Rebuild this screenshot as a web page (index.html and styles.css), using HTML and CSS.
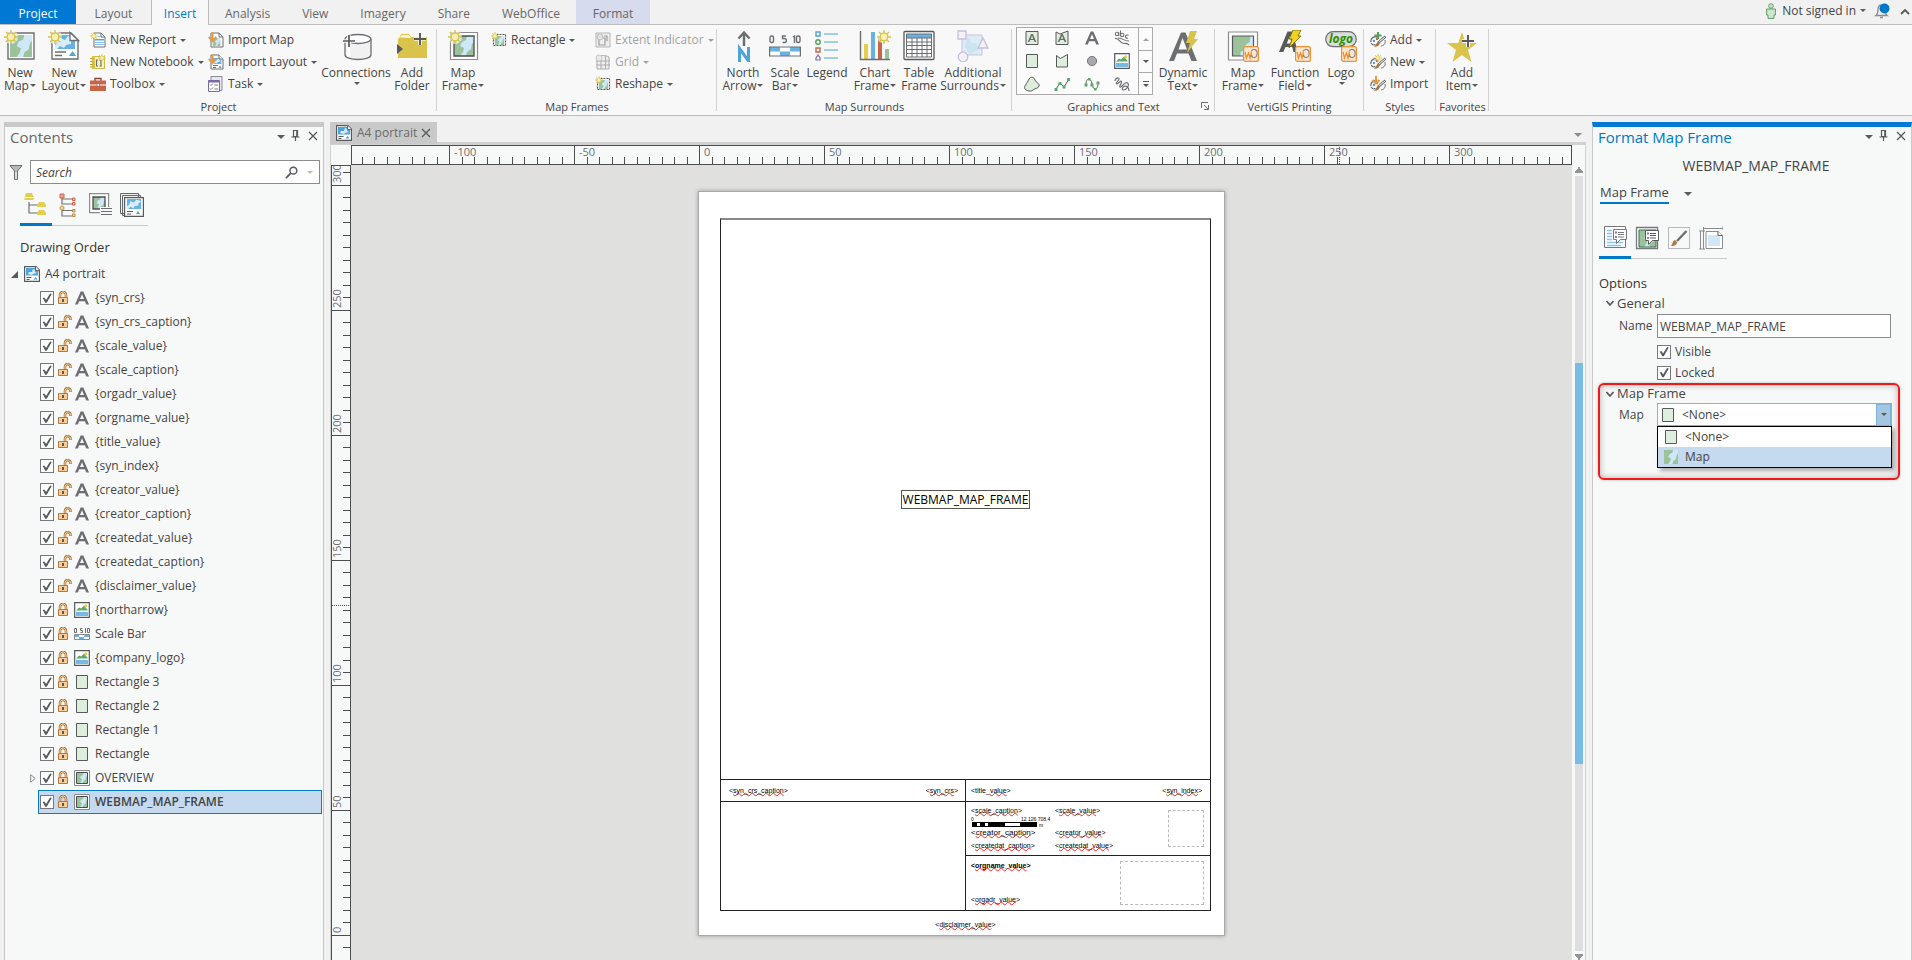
FILE: index.html
```html
<!DOCTYPE html>
<html lang="en">
<head>
<meta charset="utf-8">
<title>A4 portrait - Layout</title>
<link rel="stylesheet" href="styles.css">
</head>
<body>
<svg class="defs" aria-hidden="true">
  <defs>
    <symbol id="sun" viewBox="0 0 14 14"><path d="M7 0v14M0 7h14M2 2l10 10M12 2L2 12" stroke="#d9c34a" stroke-width="1.4"/><circle cx="7" cy="7" r="3.8" fill="#f8efb4" stroke="#d9c34a" stroke-width="1.3"/></symbol>
    <symbol id="terrain" viewBox="0 0 20 20"><path fill="#cfe8f7" d="M0 0h20v20H0z"/><path fill="#9bc29b" d="M0 0h13l-1 4-4 2-2 4 4 2-1 4-3 4H0zM20 5v15h-8l1-4 4-3 1-5z"/></symbol>
    <symbol id="blueland" viewBox="0 0 20 14"><path fill="#67b2e3" d="M0 0h20v14H0z"/><path fill="#d7edf9" d="M0 10l3-2 2-5 5 2 3-4 5 1 2 2-4 2v3l-5 1-2 3-4-2-3 3H0z"/></symbol>
    <symbol id="i-newmap" viewBox="0 0 32 32"><path d="M4 3h26v26H4z" fill="#fff" stroke="#6d6e71" stroke-width="1.4"/><use href="#terrain" x="6" y="5" width="22" height="22"/><circle cx="7" cy="7" r="7" fill="#f8f8f8" opacity=".7"/><use href="#sun" width="14" height="14"/></symbol>
    <symbol id="i-newlayout" viewBox="0 0 32 32"><path d="M4 3h19l7 7v19H4z" fill="#fff" stroke="#6d6e71" stroke-width="1.4"/><use href="#blueland" x="6" y="5" width="22" height="14" preserveAspectRatio="none"/><path d="M22 2.500v8h8.500z" fill="#fff" stroke="#6d6e71" stroke-width="1.300"/><path d="M7 22h11M7 25.500h7" stroke="#6d6e71" stroke-width="1.400"/><path d="M21 26l3.500-5 3.500 5z" fill="#4fa3db"/><circle cx="7" cy="7" r="7" fill="#f8f8f8" opacity=".7"/><use href="#sun" width="14" height="14"/></symbol>
    <symbol id="i-report" viewBox="0 0 16 16"><path d="M4 1h7l4 4v10H4z" fill="#fff" stroke="#6d6e71"/><path d="M11 1v4h4" fill="none" stroke="#6d6e71"/><path d="M5 7h9v1.500H5z" fill="#4fa3db"/><path d="M5 10.500h9M5 12.500h9M8 4.500h3" stroke="#85bfe4"/><use href="#sun" width="8" height="8"/></symbol>
    <symbol id="i-notebook" viewBox="0 0 16 16"><path d="M2.500 2.500h12v12h-12z" fill="#fbf3c4" stroke="#d0b93d"/><path d="M2 2h3v13H2z" fill="#d9c34a"/><path d="M0 4.500h3M0 7.500h3M0 10.500h3M0 13h3" stroke="#b8a12c"/><path d="M8 6H6.500v6H8M9.500 6H11v6H9.500" fill="none" stroke="#6d6e71" stroke-width="1.200"/><use href="#sun" x="8" width="8" height="8"/></symbol>
    <symbol id="i-toolbox" viewBox="0 0 16 16"><path d="M5 5V2.500h6V5" fill="none" stroke="#8b4434" stroke-width="1.300"/><path d="M0 4.500h16V15H0z" fill="#c96547"/><path d="M0 9h16" stroke="#fff"/><path d="M7 7.500h2.500v3H7z" fill="#fff" stroke="#8b4434" stroke-width=".6"/></symbol>
    <symbol id="i-importmap" viewBox="0 0 16 16"><path d="M3 1h8l4 4v10H3z" fill="#fff" stroke="#6d6e71"/><path d="M11 1v4h4" fill="none" stroke="#6d6e71"/><use href="#terrain" x="4.500" y="6" width="8" height="8"/><path d="M4.500 0v8M.8 5l3.700 4 3.700-4" fill="none" stroke="#e79a43" stroke-width="2"/></symbol>
    <symbol id="i-importlayout" viewBox="0 0 16 16"><path d="M3 1h8l4 4v10H3z" fill="#fff" stroke="#6d6e71"/><use href="#blueland" x="4" y="4" width="10" height="6"/><path d="M11 1v4h4" fill="#fff" stroke="#6d6e71"/><path d="M5 11.500h5M5 13.500h3" stroke="#6d6e71"/><path d="M10.500 14l1.500-2.500 1.500 2.500z" fill="#4fa3db"/><path d="M4.500 0v8M.8 5l3.700 4 3.700-4" fill="none" stroke="#e79a43" stroke-width="2"/></symbol>
    <symbol id="i-task" viewBox="0 0 16 16"><path d="M3 .5h11v14H3z" fill="#e6e6ee" stroke="#8a8a90"/><path d="M.5 4.500h11v11H.5z" fill="#fff" stroke="#7a68a8"/><path d="M.5 5.500h11" stroke="#7a68a8" stroke-width="2"/><path d="M2 8.500l1 1 2-2M2 12.500l1 1 2-2" fill="none" stroke="#4fa05a"/><path d="M6.500 9H10M6.500 13H10" stroke="#7a68a8"/></symbol>
    <symbol id="i-db" viewBox="0 0 32 32"><path d="M5 9v16c0 2.500 5.500 4.500 13 4.500S31 27.500 31 25V9z" fill="#f1f1f1"/><path d="M5 9v16c0 2.500 5.500 4.500 13 4.500S31 27.500 31 25V9" fill="none" stroke="#6d6e71" stroke-width="1.300"/><ellipse cx="18" cy="9" rx="13" ry="4.500" fill="#fff" stroke="#6d6e71" stroke-width="1.300"/><path d="M8.500 14v13" stroke="#fff" stroke-width="3"/><path d="M9 5v12M3 11h12" stroke="#f8f8f8" stroke-width="3.500"/><path d="M9 5v12M3 11h12" stroke="#58595b" stroke-width="1.700"/></symbol>
    <symbol id="i-folder" viewBox="0 0 32 32"><path d="M1 28V6l2-3h9l2 3h17v22z" fill="#fdf8dc"/><path d="M2 28V9l2-2 1-3h8l2 3h16v21z" fill="#d9c34a"/><path d="M4 7.500L5.500 5H13l2 3" fill="#fbf6da"/><path d="M1 14l6 5-6 5z" fill="#58595b"/><path d="M24 3v12M18 9h12" stroke="#fdf8dc" stroke-width="3.600"/><path d="M24 3v12M18 9h12" stroke="#58595b" stroke-width="1.900"/></symbol>
    <symbol id="i-mapframe" viewBox="0 0 32 32"><path d="M3.500 2.500h27v27h-27z" fill="#fff" stroke="#8b8c8f" stroke-width="1.200"/><path d="M7 6h20v20H7z" fill="#cfe8f7"/><use href="#terrain" x="7" y="6" width="20" height="20"/><path d="M7 6h20v20H7z" fill="none" stroke="#4d4d4f" stroke-width="1.300"/><circle cx="8" cy="7" r="7" fill="#f8f8f8" opacity=".7"/><use href="#sun" x="1" width="14" height="14"/></symbol>
    <symbol id="i-rectframe" viewBox="0 0 16 16"><use href="#terrain" x="4" y="4" width="9" height="9"/><path d="M2.500 2.500h12v11h-12z" fill="none" stroke="#58595b" stroke-width="1.200" stroke-dasharray="2 1"/><use href="#sun" width="8" height="8"/></symbol>
    <symbol id="i-extent" viewBox="0 0 16 16"><path d="M1 1h14v14H1z" fill="#eee" stroke="#b5b5b5"/><path d="M4 6h6v7H4zM9 4h3v5" fill="none" stroke="#9d9d9d" stroke-width="1.200"/><circle cx="5" cy="5" r="3" fill="#e2e2e2" stroke="#c0c0c0"/></symbol>
    <symbol id="i-grid" viewBox="0 0 16 16"><path d="M2 3c5-2 8-2 12 0v12H2zM1 7h14M1 11h14M6 2v13M10.500 2v13" fill="#eee" stroke="#adadad"/><circle cx="4" cy="4" r="3" fill="#e8e8e8" stroke="#c8c8c8"/></symbol>
    <symbol id="i-north" viewBox="0 0 32 32"><path d="M17 16V3M11.500 8.500L17 2.500l5.500 6" fill="none" stroke="#6d6e71" stroke-width="2.500"/><path d="M12.500 32V18.500L21.500 31V17" fill="none" stroke="#4fa3db" stroke-width="3"/></symbol>
    <symbol id="i-scale" viewBox="0 0 32 32"><g fill="none" stroke="#6d6e71" stroke-width="1.400"><rect x="1" y="6" width="3.500" height="6.500" rx="1.500"/><path d="M17 6h-3.500v2.500h2c2.500 0 2.500 4 0 4h-2M24 7l1.500-1v7"/><rect x="27.500" y="6" width="3.500" height="6.500" rx="1.500"/></g><path d="M0 17h32v9H0z" fill="#fff"/><path d="M0 17h11v4.500H0zM11 21.500h10V26H11zM21 17h11v4.500H21z" fill="#67b2e3"/><path d="M.6 17h30.800v9H.6z" fill="none" stroke="#6d6e71" stroke-width="1.200"/></symbol>
    <symbol id="i-legend" viewBox="0 0 32 32"><path d="M13 4h14M13 12h14M13 20h14M13 28h14" stroke="#4fa3db" stroke-width="1.200"/><path d="M5 2h4v4H5z" fill="#fff" stroke="#4fa3db" stroke-width="1.400"/><circle cx="7" cy="12" r="2.200" fill="#fff" stroke="#4fa05a" stroke-width="1.400"/><path d="M5 18h4v4H5z" fill="#fff" stroke="#c96547" stroke-width="1.400"/><path d="M5 30v-2l2-3 2 3v2z" fill="#fff" stroke="#7a68a8" stroke-width="1.200"/></symbol>
    <symbol id="i-chart" viewBox="0 0 32 32"><path d="M5 14h4v15H5z" fill="#e3ce4e"/><path d="M12 2h4v27h-4z" fill="#67b2e3"/><path d="M19 8h4v21h-4z" fill="#c96547"/><path d="M26 19h4v10h-4z" fill="#9bc29b"/><path d="M1.500 1v28.500H31" fill="none" stroke="#6d6e71" stroke-width="1.400"/><circle cx="24" cy="7" r="6" fill="#f8f8f8" opacity=".7"/><use href="#sun" x="18" width="14" height="14"/></symbol>
    <symbol id="i-table" viewBox="0 0 32 32"><rect x="1" y="1.500" width="30" height="28" rx="1" fill="#fff" stroke="#58595b" stroke-width="1.300"/><path d="M3.500 4h25v4h-25z" fill="#67b2e3"/><path d="M3.500 4h25v23h-25zM3.500 8h25M3.500 12h25M3.500 15.500h25M3.500 19.500h25M3.500 23.500h25M9 8v19M14 8v19M19 8v19M24 8v19" fill="none" stroke="#6d6e71"/></symbol>
    <symbol id="i-surrounds" viewBox="0 0 32 32"><path d="M5 5h20v20H5z" fill="#dcecf5" stroke="#c8c3da"/><path d="M10 8c5 2 3 7 9 5l2 7-8 4-5-6z" fill="#cbe4f2"/><path d="M1 1h8v8H1z" fill="#f3f0f7" stroke="#c5bfda" stroke-width="1.300"/><path d="M26 8l5 10H21z" fill="#f3f0f7" stroke="#c5bfda" stroke-width="1.300"/><circle cx="6" cy="27" r="4.800" fill="#f3f0f7" stroke="#c5bfda" stroke-width="1.300"/></symbol>
    <symbol id="i-a" viewBox="0 0 16 16"><path fill-rule="evenodd" fill="#6d6e71" d="M1 14.500L6.700 1.500h2.600L15 14.500h-2.800l-1.300-3.300H5.100l-1.300 3.300zM6 9h4L8 4.200z"/></symbol>
    <symbol id="i-dyn" viewBox="0 0 32 32"><path fill-rule="evenodd" fill="#6d6e71" d="M2 31L14 2.500h4.500L30 31h-5.500l-3-7.500H10L7 31zM11.500 19.500h8.500L15.500 8z"/><path d="M23 1h7l-3 8h4L20 23l3-10h-4z" fill="#d9c34a"/></symbol>
    <symbol id="g-textrect" viewBox="0 0 16 16"><path d="M2 1.500h12v13H2z" fill="#ddeedc" stroke="#58595b"/><use href="#i-a" x="3" y="3" width="10" height="10"/></symbol>
    <symbol id="g-textpoly" viewBox="0 0 16 16"><path d="M2 2l4 2 8-3v13.500H2z" fill="#ddeedc" stroke="#58595b"/><use href="#i-a" x="3" y="3" width="10" height="10"/></symbol>
    <symbol id="g-textcurve" viewBox="0 0 16 16"><g fill="none" stroke="#6d6e71" stroke-width="1.100"><circle cx="3" cy="4" r="1.700"/><path d="M4.700 2.500V6M6.500.5V6"/><circle cx="8.200" cy="5" r="1.700"/><path d="M14.500 5.200c-4-1-4 3.500-.5 3M1 8.500c4-1 5 5.500 9 5s4 1 5 1.500M4 8c4 0 6 3 11 3"/></g></symbol>
    <symbol id="g-rect" viewBox="0 0 16 16"><path d="M2.500 1.500h11v13h-11z" fill="#ddeedc" stroke="#58595b"/></symbol>
    <symbol id="g-poly" viewBox="0 0 16 16"><path d="M2.500 2.500l4 3 7-4V14h-11z" fill="#ddeedc" stroke="#58595b"/></symbol>
    <symbol id="g-circle" viewBox="0 0 16 16"><circle cx="8" cy="8" r="4.600" fill="#a7a9ac" stroke="#77787b"/></symbol>
    <symbol id="g-picture" viewBox="0 0 16 16"><path d="M.7.7h14.600v14.600H.7z" fill="#fff" stroke="#58595b" stroke-width="1.200"/><path d="M2 8.500l3-3 2 1 3-3 4 5z" fill="#5fa968"/><path d="M2 10h12v4H2z" fill="#75b9e4"/><circle cx="11.800" cy="3.800" r="1.600" fill="#e3ce4e"/></symbol>
    <symbol id="g-blob" viewBox="0 0 16 16"><path d="M5 3c2-3 5-2 6 1s5 3 4 6-4 2-6 4-6 1-8-1 2-5 4-10z" fill="#ddeedc" stroke="#58595b"/></symbol>
    <symbol id="g-line" viewBox="0 0 16 16"><path d="M2 13l4-6 4 4 5-8" fill="none" stroke="#58595b"/><path d="M.5 12h3v3h-3zM4.500 6h3v3h-3zM8.500 9.500h3v3h-3zM13 2h3v3h-3z" fill="#5fa968"/></symbol>
    <symbol id="g-curve" viewBox="0 0 16 16"><path d="M2 9C2 1 7 1 8 8s6 7 6-1" fill="none" stroke="#58595b"/><path d="M.5 7.500h3v3h-3zM6.500 7.500h3v3h-3zM12.500 5.500h3v3h-3zM4 2h2.500v2.500H4zM10 12h2.500v2.500H10z" fill="#5fa968"/></symbol>
    <symbol id="g-free" viewBox="0 0 16 16"><path d="M1 5c0-3 4-4 4-2S1.500 6 2.500 7.500 6.500 4 7.500 5.500 4.500 10 6 11s5-6 7.500-4-1 7-4 7 0-6 4-3c1.500 1 1.500 2.500 1.500 4" fill="none" stroke="#6d6e71" stroke-width="1.200"/></symbol>
    <symbol id="i-wo" viewBox="0 0 16 16"><rect x=".6" y=".6" width="14.800" height="14.800" rx="2" fill="#fde6d0" stroke="#ef8f2f" stroke-width="1.200"/><path d="M2 6l1.500 6L5.500 7l1.500 5L8.500 6" fill="none" stroke="#ef8f2f" stroke-width="1.300"/><path d="M8 5.500c2-4 7-2 6 3s-6 3-5.500 0" fill="none" stroke="#8b8c8f" stroke-width="1.200"/></symbol>
    <symbol id="i-womap" viewBox="0 0 32 32"><path d="M1.500 2h29v28h-29z" fill="#fff" stroke="#8b8c8f" stroke-width="1.200"/><path d="M5.500 6h21v20h-21z" fill="#cfe8f7"/><path d="M5.500 6h18l-1 6-4 3-1 5-4 2v4h-8z" fill="#9bc29b"/><path d="M5.500 6h21v20h-21z" fill="none" stroke="#58595b" stroke-width="1.200"/><use href="#i-wo" x="16" y="16" width="16" height="16"/></symbol>
    <symbol id="i-wofn" viewBox="0 0 32 32"><path fill-rule="evenodd" fill="#58595b" d="M0 22L8.500 1.500H13L19 22h-4.500l-1.300-5H6.500L4.300 22zM7.800 13.500h4.700L10.800 6z"/><path d="M14 0h8l-3 6h3L10 18l3-9h-3z" fill="#f0d321" stroke="#6d5c00" stroke-width=".8"/><use href="#i-wo" x="16" y="16" width="16" height="16"/></symbol>
    <symbol id="i-wologo" viewBox="0 0 32 32"><rect x=".7" y="1.700" width="30.600" height="15" rx="7.500" fill="#dcdcdc" stroke="#6d6e71" stroke-width="1.200"/><text x="4" y="12.500" class="logo-text">logo</text><use href="#i-wo" x="16" y="16" width="16" height="16"/></symbol>
    <symbol id="palette" viewBox="0 0 16 16"><path d="M1 10c-1-4 4-7 7-4M1 11c2 3 4 2 4 1" fill="#eee" stroke="#6d6e71" stroke-width="1.200"/><path d="M3 8h2v2H3z" fill="#4fa3db"/><path d="M6 6h2v2H6z" fill="#c96547"/><path d="M15.500 4.500L8 11" stroke="#6d6e71" stroke-width="2.600"/><path d="M15 5L9 10" stroke="#fff"/><path d="M9 9c2 3-1 6-5 6 2-2 2-4 5-6z" fill="#a87645"/><path d="M15 8c1 4-2 6-4 6" fill="none" stroke="#6d6e71"/></symbol>
    <symbol id="i-sadd" viewBox="0 0 16 16"><use href="#palette" width="16" height="16"/><path d="M8 0v7M4.500 3.500h7" stroke="#4fa05a" stroke-width="2"/></symbol>
    <symbol id="i-snew" viewBox="0 0 16 16"><use href="#palette" width="16" height="16"/><use href="#sun" x="4" y="0" width="8" height="8"/></symbol>
    <symbol id="i-simport" viewBox="0 0 16 16"><use href="#palette" width="16" height="16"/><path d="M6 0v7M2.500 4L6 7.500 9.500 4" fill="none" stroke="#e79a43" stroke-width="2"/></symbol>
    <symbol id="i-star" viewBox="0 0 32 32"><path d="M16 2l3.700 11H31l-9 7 3.500 12L16 25l-9.500 7L10 20 1 13h11.300z" fill="#d9c34a"/><path d="M22 5v12M16 11h12" stroke="#f8f8f8" stroke-width="4"/><path d="M22 5v12M16 11h12" stroke="#58595b" stroke-width="2"/></symbol>
    <symbol id="i-layout" viewBox="0 0 16 16"><path d="M.6.6h11.400l3.400 3.400v11.400H.6z" fill="#fff" stroke="#58595b" stroke-width="1.200"/><path d="M2 2h9v3h3v4.500H2z" fill="#4fa3db"/><path d="M4 8l1-2 3 0 1-3 2 1v2l2 1-4 1-1 1z" fill="#d7edf9"/><path d="M11.500.6v4h4" fill="#fff" stroke="#58595b"/><path d="M2.500 11.500h5M2.500 13.500h3" stroke="#58595b"/><path d="M9.500 13.500l2-2.500 2 2.500z" fill="#4fa3db"/></symbol>
    <symbol id="i-frame" viewBox="0 0 16 16"><path d="M.5.500h15v15H.5z" fill="#fff" stroke="#8b8c8f"/><use href="#terrain" x="3" y="3" width="10" height="10"/><path d="M2.500 2.500h11v11h-11z" fill="none" stroke="#4d4d4f"/></symbol>
    <symbol id="i-scalesm" viewBox="0 0 16 16"><path d="M.5 2.500h2v4h-2zM8.500 2.500h-2v2h2v2h-2M11.500 2v5M13.500 2.500h2v4h-2z" fill="none" stroke="#6d6e71"/><path d="M0 8.500h16v5H0z" fill="#fff"/><path d="M0 9h5v2H0zM5 11h5v2H5zM10 9h6v2h-6z" fill="#67b2e3"/><path d="M.5 8.500h15v5H.5z" fill="none" stroke="#8b8c8f"/></symbol>
    <symbol id="i-lock" viewBox="0 0 12 14"><path d="M3 6V4c0-4 6-4 6 0v2" fill="none" stroke="#b07a45" stroke-width="2.600"/><path d="M3 6V4c0-4 6-4 6 0v2" fill="none" stroke="#f9cd95" stroke-width="1"/><path d="M1.500 6.500h9v6h-9z" fill="#f9cd95" stroke="#b07a45"/><path d="M5 8h2v3H5z" fill="#58595b"/></symbol>
    <symbol id="i-unlock" viewBox="0 0 15 14"><path d="M8 6V4c0-4 5.500-3.500 5.500 0v1" fill="none" stroke="#b07a45" stroke-width="2.600"/><path d="M8 6V4c0-4 5.500-3.500 5.500 0v.5" fill="none" stroke="#f9cd95" stroke-width="1"/><path d="M1.500 6.500h9v6h-9z" fill="#f9cd95" stroke="#b07a45"/><path d="M5 8h2v3H5z" fill="#58595b"/></symbol>
    <symbol id="i-pin" viewBox="0 0 10 12"><path d="M2.500.5h4v6h-4zM5.800.5v6M.5 7h8M4.500 7v4" fill="none" stroke="#58595b" stroke-width="1.200"/></symbol>
    <symbol id="i-close" viewBox="0 0 10 10"><path d="M1 1l8 8M9 1L1 9" stroke="#58595b" stroke-width="1.300"/></symbol>
    <symbol id="i-chev" viewBox="0 0 10 8"><path d="M1.500 2l3.500 4 3.500-4" fill="none" stroke="#58595b" stroke-width="1.800"/></symbol>
    <symbol id="i-maptile" viewBox="0 0 14 14"><use href="#terrain" width="14" height="14"/></symbol>
  </defs>
</svg>

<div class="app">
  <header>
    <nav class="tabs" aria-label="Ribbon tabs">
      <button class="tab tab-project">Project</button>
      <button class="tab tab-layout">Layout</button>
      <button class="tab tab-active">Insert</button>
      <button class="tab">Analysis</button>
      <button class="tab">View</button>
      <button class="tab">Imagery</button>
      <button class="tab">Share</button>
      <button class="tab">WebOffice</button>
      <button class="tab tab-format">Format</button>
      <div class="account">
        <svg class="person" viewBox="0 0 10 16"><circle cx="5" cy="3" r="2.300" fill="#cfe6cf" stroke="#5c9f63"/><path d="M.6 6h8.800v6H8v3.400H2V12H.6z" fill="#cfe6cf" stroke="#5c9f63"/></svg>
        <button class="signin caret">Not signed in</button>
        <svg class="bell" viewBox="0 0 16 16"><path d="M2 12.500c2-1.500 2-3 2-6C4 3 5.500 2 7.500 2S11 3 11 6.500c0 3 0 4.500 2 6zM6 14.500h3" fill="#f1f1f1" stroke="#8b8c8f" stroke-width="1.300"/><circle cx="10.500" cy="5.500" r="5" fill="#0078c8"/></svg>
        <svg class="collapse" viewBox="0 0 10 7"><path d="M1 6l4-4 4 4" fill="none" stroke="#58595b" stroke-width="1.800"/></svg>
      </div>
    </nav>

    <div class="ribbon">
      <section class="group g-project">
        <div class="tools">
          <button class="big w40"><svg><use href="#i-newmap"/></svg><span>New</span><span class="caret">Map</span></button>
          <button class="big w48"><svg><use href="#i-newlayout"/></svg><span>New</span><span class="caret">Layout</span></button>
          <div class="stack w118">
            <button class="small caret"><svg><use href="#i-report"/></svg>New Report</button>
            <button class="small caret"><svg><use href="#i-notebook"/></svg>New Notebook</button>
            <button class="small caret"><svg><use href="#i-toolbox"/></svg>Toolbox</button>
          </div>
          <div class="stack w114">
            <button class="small"><svg><use href="#i-importmap"/></svg>Import Map</button>
            <button class="small caret"><svg><use href="#i-importlayout"/></svg>Import Layout</button>
            <button class="small caret"><svg><use href="#i-task"/></svg>Task</button>
          </div>
          <button class="big w72"><svg><use href="#i-db"/></svg><span>Connections</span><span class="caret only"></span></button>
          <button class="big w40"><svg><use href="#i-folder"/></svg><span>Add</span><span>Folder</span></button>
        </div>
        <h2>Project</h2>
      </section>
      <section class="group g-frames">
        <div class="tools">
          <button class="big w52"><svg><use href="#i-mapframe"/></svg><span>Map</span><span class="caret">Frame</span></button>
          <div class="stack w104">
            <button class="small caret"><svg><use href="#i-rectframe"/></svg>Rectangle</button>
          </div>
          <div class="stack">
            <button class="small caret" disabled><svg><use href="#i-extent"/></svg>Extent Indicator</button>
            <button class="small caret" disabled><svg><use href="#i-grid"/></svg>Grid</button>
            <button class="small caret"><svg><use href="#i-rectframe"/></svg>Reshape</button>
          </div>
        </div>
        <h2>Map Frames</h2>
      </section>
      <section class="group g-surrounds">
        <div class="tools">
          <button class="big w44"><svg><use href="#i-north"/></svg><span>North</span><span class="caret">Arrow</span></button>
          <button class="big w40"><svg><use href="#i-scale"/></svg><span>Scale</span><span class="caret">Bar</span></button>
          <button class="big w44"><svg><use href="#i-legend"/></svg><span>Legend</span></button>
          <button class="big w52"><svg><use href="#i-chart"/></svg><span>Chart</span><span class="caret">Frame</span></button>
          <button class="big w36"><svg><use href="#i-table"/></svg><span>Table</span><span>Frame</span></button>
          <button class="big w72"><svg><use href="#i-surrounds"/></svg><span>Additional</span><span class="caret">Surrounds</span></button>
        </div>
        <h2>Map Surrounds</h2>
      </section>
      <section class="group g-graphics">
        <div class="tools">
          <div class="gallery">
            <div class="cells">
              <svg><use href="#g-textrect"/></svg><svg><use href="#g-textpoly"/></svg><svg><use href="#i-a"/></svg><svg><use href="#g-textcurve"/></svg>
              <svg><use href="#g-rect"/></svg><svg><use href="#g-poly"/></svg><svg><use href="#g-circle"/></svg><svg><use href="#g-picture"/></svg>
              <svg><use href="#g-blob"/></svg><svg><use href="#g-line"/></svg><svg><use href="#g-curve"/></svg><svg><use href="#g-free"/></svg>
            </div>
            <div class="steps">
              <button aria-label="Scroll up"><svg viewBox="0 0 6 3"><path d="M0 3l3-3 3 3z" fill="#a0a0a0"/></svg></button>
              <button aria-label="Scroll down"><svg viewBox="0 0 6 3"><path d="M0 0h6L3 3z" fill="#58595b"/></svg></button>
              <button aria-label="More"><svg class="more" viewBox="0 0 6 6"><path d="M0 3h6L3 6zM0 0h6v1H0z" fill="#58595b"/></svg></button>
            </div>
          </div>
          <button class="big w60"><svg><use href="#i-dyn"/></svg><span>Dynamic</span><span class="caret">Text</span></button>
        </div>
        <h2>Graphics and Text</h2>
        <svg class="launcher" viewBox="0 0 8 8"><path d="M.5 6V.5H7M3 3l4 4M7.500 3v4.500H3" fill="none" stroke="#6d6e71"/></svg>
      </section>
      <section class="group g-verti">
        <div class="tools">
          <button class="big w52"><svg><use href="#i-womap"/></svg><span>Map</span><span class="caret">Frame</span></button>
          <button class="big w52"><svg><use href="#i-wofn"/></svg><span>Function</span><span class="caret">Field</span></button>
          <button class="big w40"><svg><use href="#i-wologo"/></svg><span>Logo</span><span class="caret only"></span></button>
        </div>
        <h2>VertiGIS Printing</h2>
      </section>
      <section class="group g-styles">
        <div class="tools">
          <div class="stack">
            <button class="small caret"><svg><use href="#i-sadd"/></svg>Add</button>
            <button class="small caret"><svg><use href="#i-snew"/></svg>New</button>
            <button class="small"><svg><use href="#i-simport"/></svg>Import</button>
          </div>
        </div>
        <h2>Styles</h2>
      </section>
      <section class="group g-fav">
        <div class="tools">
          <button class="big w52"><svg><use href="#i-star"/></svg><span>Add</span><span class="caret">Item</span></button>
        </div>
        <h2>Favorites</h2>
      </section>
    </div>
  </header>

  <main>
    <aside class="panel contents">
      <div class="panel-head"><h1>Contents</h1><i class="tri"></i><svg class="pin"><use href="#i-pin"/></svg><svg class="close"><use href="#i-close"/></svg></div>
      <div class="search-row">
        <svg class="funnel" viewBox="0 0 14 17"><path d="M1 1.500h12L8.500 7v8.500h-3V7z" fill="#b9babc" stroke="#6d6e71"/><path d="M6.500 8h1v7h-1z" fill="#fff"/></svg>
        <div class="search">
          <input type="search" placeholder="Search" aria-label="Search">
          <svg class="lens" viewBox="0 0 14 14"><circle cx="9" cy="5" r="3.700" fill="none" stroke="#58595b" stroke-width="1.600"/><path d="M6 8l-5 5" stroke="#58595b" stroke-width="2"/></svg>
          <i class="tri faint"></i>
        </div>
      </div>
      <div class="view-icons">
        <button class="on" aria-label="List by drawing order"><svg viewBox="0 0 24 24"><path d="M5 10v11h9M5 13h9" fill="none" stroke="#6d6e71" stroke-width="1.200"/><path d="M2 1h6l1.500 4v3h-9V5zM15 10h5l2 3v2h-9v-2zM15 18h5l2 3v2h-9v-2z" fill="#e3ce4e"/><path d="M.5 5.500h9" stroke="#fff"/></svg></button>
        <button aria-label="List by element type"><svg viewBox="0 0 24 24"><path d="M6 5v6h10M6 6h10M6 15v8h10M6 17.500h10" fill="none" stroke="#6d6e71" stroke-width="1.200"/><path d="M4 1h4v4H4z" fill="#f3a292" stroke="#d4604a"/><circle cx="6" cy="15" r="2" fill="#f9d79a" stroke="#c79a4e"/><path d="M16.500 5h2.500v2.500h-2.500zM16.500 9.500h2.500v2.500h-2.500z" fill="#f7c4ba" stroke="#d4604a"/><path d="M16.500 16.500h2.500v2.500h-2.500zM16.500 21h2.500v2.500h-2.500z" fill="#f9d79a" stroke="#c08a4a"/></svg></button>
        <button aria-label="List by map series"><svg viewBox="0 0 24 24"><path d="M1.600.6h19v19h-19z" fill="#fff" stroke="#8b8c8f" stroke-width="1.200"/><use href="#terrain" x="5" y="4" width="12" height="12"/><path d="M5 4h12v12H5z" fill="none" stroke="#4d4d4f" stroke-width="1.300"/><path d="M12 14h12v10H12z" fill="#f7f9f9"/><path d="M13 15.500h11M13 18.500h11M13 21.500h11" stroke="#6d6e71" stroke-width="1.200"/></svg></button>
        <button aria-label="List by layout"><svg viewBox="0 0 24 24"><path d="M.6.600h18v20H.6zM2.600 2.600h18v20h-18z" fill="#fff" stroke="#58595b"/><path d="M4.600 4.600h18.800v18.800H4.600z" fill="#fff" stroke="#58595b" stroke-width="1.200"/><use href="#blueland" x="6" y="6" width="16" height="10"/><path d="M7 18.500h6M7 21h4" stroke="#58595b"/><path d="M16 21l2-3 2 3z" fill="#4fa3db"/></svg></button>
      </div>
      <h3>Drawing Order</h3>
      <div class="root"><svg class="expand" viewBox="0 0 7 7"><path d="M7 0v7H0z" fill="#58595b"/></svg><svg class="ic"><use href="#i-layout"/></svg><span>A4 portrait</span></div>
      <ul class="tree">
        <li><label><input type="checkbox" checked><svg class="lk"><use href="#i-lock"/></svg><svg class="ic"><use href="#i-a"/></svg>{syn_crs}</label></li>
        <li><label><input type="checkbox" checked><svg class="ul"><use href="#i-unlock"/></svg><svg class="ic"><use href="#i-a"/></svg>{syn_crs_caption}</label></li>
        <li><label><input type="checkbox" checked><svg class="ul"><use href="#i-unlock"/></svg><svg class="ic"><use href="#i-a"/></svg>{scale_value}</label></li>
        <li><label><input type="checkbox" checked><svg class="ul"><use href="#i-unlock"/></svg><svg class="ic"><use href="#i-a"/></svg>{scale_caption}</label></li>
        <li><label><input type="checkbox" checked><svg class="ul"><use href="#i-unlock"/></svg><svg class="ic"><use href="#i-a"/></svg>{orgadr_value}</label></li>
        <li><label><input type="checkbox" checked><svg class="ul"><use href="#i-unlock"/></svg><svg class="ic"><use href="#i-a"/></svg>{orgname_value}</label></li>
        <li><label><input type="checkbox" checked><svg class="ul"><use href="#i-unlock"/></svg><svg class="ic"><use href="#i-a"/></svg>{title_value}</label></li>
        <li><label><input type="checkbox" checked><svg class="ul"><use href="#i-unlock"/></svg><svg class="ic"><use href="#i-a"/></svg>{syn_index}</label></li>
        <li><label><input type="checkbox" checked><svg class="ul"><use href="#i-unlock"/></svg><svg class="ic"><use href="#i-a"/></svg>{creator_value}</label></li>
        <li><label><input type="checkbox" checked><svg class="ul"><use href="#i-unlock"/></svg><svg class="ic"><use href="#i-a"/></svg>{creator_caption}</label></li>
        <li><label><input type="checkbox" checked><svg class="ul"><use href="#i-unlock"/></svg><svg class="ic"><use href="#i-a"/></svg>{createdat_value}</label></li>
        <li><label><input type="checkbox" checked><svg class="ul"><use href="#i-unlock"/></svg><svg class="ic"><use href="#i-a"/></svg>{createdat_caption}</label></li>
        <li><label><input type="checkbox" checked><svg class="ul"><use href="#i-unlock"/></svg><svg class="ic"><use href="#i-a"/></svg>{disclaimer_value}</label></li>
        <li><label><input type="checkbox" checked><svg class="lk"><use href="#i-lock"/></svg><svg class="ic"><use href="#g-picture"/></svg>{northarrow}</label></li>
        <li><label><input type="checkbox" checked><svg class="lk"><use href="#i-lock"/></svg><svg class="ic"><use href="#i-scalesm"/></svg>Scale Bar</label></li>
        <li><label><input type="checkbox" checked><svg class="lk"><use href="#i-lock"/></svg><svg class="ic"><use href="#g-picture"/></svg>{company_logo}</label></li>
        <li><label><input type="checkbox" checked><svg class="lk"><use href="#i-lock"/></svg><svg class="ic"><use href="#g-rect"/></svg>Rectangle 3</label></li>
        <li><label><input type="checkbox" checked><svg class="lk"><use href="#i-lock"/></svg><svg class="ic"><use href="#g-rect"/></svg>Rectangle 2</label></li>
        <li><label><input type="checkbox" checked><svg class="lk"><use href="#i-lock"/></svg><svg class="ic"><use href="#g-rect"/></svg>Rectangle 1</label></li>
        <li><label><input type="checkbox" checked><svg class="lk"><use href="#i-lock"/></svg><svg class="ic"><use href="#g-rect"/></svg>Rectangle</label></li>
        <li class="parent"><svg class="closed" viewBox="0 0 6 9"><path d="M.7.7v7.600l4.500-3.800z" fill="none" stroke="#8b8c8f"/></svg><label><input type="checkbox" checked><svg class="lk"><use href="#i-lock"/></svg><svg class="ic"><use href="#i-frame"/></svg>OVERVIEW</label></li>
        <li class="selected"><label><input type="checkbox" checked><svg class="lk"><use href="#i-lock"/></svg><svg class="ic"><use href="#i-frame"/></svg>WEBMAP_MAP_FRAME</label></li>
      </ul>
    </aside>

    <section class="view">
      <div class="doc-tabs"><div class="doc-tab"><svg class="ic"><use href="#i-layout"/></svg><span>A4 portrait</span><svg class="close"><use href="#i-close"/></svg></div><i class="tri grey"></i></div>
      <div class="workspace">
        <div class="corner"></div>
        <svg class="ruler-h">
          <defs><pattern id="ph" width="25" height="20" patternUnits="userSpaceOnUse"><path d="M10 11h1v8h-1zM22 11h1v8h-1z" fill="#4d4d4f"/></pattern></defs>
          <rect width="100%" height="20" fill="url(#ph)"/>
          <path d="M97.500 0v20M222.500 0v20M347.500 0v20M472.500 0v20M597.500 0v20M722.500 0v20M847.500 0v20M972.500 0v20M1097.500 0v20" stroke="#4d4d4f"/>
          <path d="M987.500 1v18" stroke="#4d4d4f" stroke-dasharray="1 1"/>
          <text x="102" y="10">-100</text><text x="227" y="10">-50</text><text x="352" y="10">0</text><text x="477" y="10">50</text><text x="602" y="10">100</text><text x="727" y="10">150</text><text x="852" y="10">200</text><text x="977" y="10">250</text><text x="1102" y="10">300</text>
        </svg>
        <svg class="ruler-v">
          <defs><pattern id="pv" width="20" height="25" patternUnits="userSpaceOnUse"><path d="M11 6h8v1h-8zM11 19h8v1h-8z" fill="#4d4d4f"/></pattern></defs>
          <rect width="20" height="100%" fill="url(#pv)"/>
          <path d="M0 19.500h20M0 144.500h20M0 269.500h20M0 394.500h20M0 519.500h20M0 644.500h20M0 769.500h20" stroke="#4d4d4f"/>
          <path d="M0 439.500h19" stroke="#4d4d4f" stroke-dasharray="1 1"/>
          <g><text transform="translate(9 17) rotate(-90)">300</text><text transform="translate(9 142) rotate(-90)">250</text><text transform="translate(9 267) rotate(-90)">200</text><text transform="translate(9 392) rotate(-90)">150</text><text transform="translate(9 517) rotate(-90)">100</text><text transform="translate(9 642) rotate(-90)">50</text><text transform="translate(9 767) rotate(-90)">0</text></g>
        </svg>
        <div class="canvas">
          <div class="sheet">
            <div class="map-area"><span class="frame-name">WEBMAP_MAP_FRAME</span></div>
            <div class="box b-crs"></div><div class="box b-title"></div><div class="box b-over"></div><div class="box b-scale"></div><div class="box b-org"></div>
            <span class="t t-crscap">&lt;<u>syn_crs_caption</u>&gt;</span>
            <span class="t t-crs">&lt;<u>syn_crs</u>&gt;</span>
            <span class="t t-title">&lt;title_<u>value</u>&gt;</span>
            <span class="t t-index">&lt;<u>syn_index</u>&gt;</span>
            <span class="t c1 r1">&lt;<u>scale_caption</u>&gt;</span><span class="t c2 r1">&lt;<u>scale_value</u>&gt;</span>
            <span class="t tiny s0">0</span><span class="t tiny s1">12 126 708,4</span><span class="t tiny s2">m</span>
            <svg class="bar" viewBox="0 0 65 5" preserveAspectRatio="none"><path d="M0 0h65v5H0z"/><path d="M5 1h3v3H5zM13 1h3v3h-3zM33 1h15v3H33z" fill="#fff"/></svg>
            <span class="t c1 r2 larger">&lt;<u>creator_caption</u>&gt;</span><span class="t c2 r2">&lt;<u>creator_value</u>&gt;</span>
            <span class="t c1 r3">&lt;<u>createdat_caption</u>&gt;</span><span class="t c2 r3">&lt;<u>createdat_value</u>&gt;</span>
            <span class="t c1 r4 strong">&lt;<u>orgname_value</u>&gt;</span>
            <span class="t c1 r5">&lt;<u>orgadr_value</u>&gt;</span>
            <span class="dash d1"></span><span class="dash d2"></span>
            <span class="t t-disc">&lt;<u>disclaimer_value</u>&gt;</span>
          </div>
        </div>
        <div class="scroll">
          <svg viewBox="0 0 8 6"><path d="M3 0h2v2h1v1h1v1h1v2H0V4h1V3h1V2h1z" fill="#949494"/></svg>
          <div class="track"><div class="thumb"></div></div>
          <svg viewBox="0 0 8 6"><path d="M0 0h8v2H7v1H6v1H5v2H3V4H2V3H1V2H0z" fill="#949494"/></svg>
        </div>
      </div>
    </section>

    <aside class="panel format">
      <div class="panel-head"><h1>Format Map Frame</h1><i class="tri"></i><svg class="pin"><use href="#i-pin"/></svg><svg class="close"><use href="#i-close"/></svg></div>
      <p class="target">WEBMAP_MAP_FRAME</p>
      <div class="mode"><button>Map Frame</button><i class="tri"></i></div>
      <div class="view-icons">
        <button class="on" aria-label="Options"><svg viewBox="0 0 24 24"><path d="M1.500 1.500h21v21h-21z" fill="#fff" stroke="#77787b"/><path d="M4 5.500h5M4 8.500h5M4 11.500h5M4 14.500h5M4 17.500h16M4 20.500h14" stroke="#8cc3e8" stroke-width="1.300"/><path d="M10.500 4.500h13v10h-6l-4 4v-4h-3z" fill="#fff" stroke="#77787b"/><path d="M15 7.500h6M15 9.500h6M15 12h6" stroke="#77787b"/><path d="M12 6.500h2v2h-2zM12 11h2v2h-2z" fill="#8e78bd"/></svg></button>
        <button aria-label="Display options"><svg viewBox="0 0 24 24"><path d="M1.500 1.500h21v21h-21z" fill="#fff" stroke="#77787b" stroke-width="1.300"/><use href="#terrain" x="4" y="4" width="17" height="17"/><path d="M4 4h17v17H4z" fill="none" stroke="#3d6e50"/><path d="M10.500 4.500h13v10h-6l-4 4v-4h-3z" fill="#fff" stroke="#58595b"/><path d="M15 7.500h6M15 9.500h6M15 12h6" stroke="#58595b"/><path d="M12 6.500h2v2h-2zM12 11h2v2h-2z" fill="#8e78bd"/></svg></button>
        <button aria-label="Display"><svg viewBox="0 0 24 24"><path d="M1.500 1.500h21v21h-21z" fill="none" stroke="#77787b" stroke-dasharray="1 1"/><path d="M19.500 5L10 15" stroke="#6d6e71" stroke-width="2.400"/><path d="M8 14l2 2c0 4-4 4-6 4 2-2 1-5 4-6z" fill="#b07a45"/></svg></button>
        <button aria-label="Placement"><svg viewBox="0 0 24 24"><path d="M4.500 1v22M1.500 5v18M0 23h6M0 5h6M5 2.500h19M24 0v4" fill="none" stroke="#8b8c8f"/><path d="M7 5.500h12l4.500 4v13H7z" fill="#fff" stroke="#8b8c8f"/><path d="M9 9h10l2 3v8H9z" fill="#cfe8f7"/><path d="M19 5.500v4h4.500" fill="#fff" stroke="#58595b"/></svg></button>
      </div>
      <h3>Options</h3>
      <section class="props">
        <h4><svg><use href="#i-chev"/></svg>General</h4>
        <div class="field name-field"><label for="name">Name</label><input id="name" type="text" value="WEBMAP_MAP_FRAME"></div>
        <label class="check"><input type="checkbox" checked>Visible</label>
        <label class="check"><input type="checkbox" checked>Locked</label>
      </section>
      <section class="props highlighted">
        <h4><svg><use href="#i-chev"/></svg>Map Frame</h4>
        <div class="field top"><label for="map">Map</label>
          <div class="combo">
            <div class="combo-box"><svg class="ic"><use href="#g-rect"/></svg><select id="map"><option>&lt;None&gt;</option><option>Map</option></select><span class="drop"><i class="tri"></i></span></div>
            <ul class="options" role="listbox">
              <li role="option"><svg class="ic"><use href="#g-rect"/></svg>&lt;None&gt;</li>
              <li role="option" class="hover"><svg class="ic"><use href="#i-maptile"/></svg>Map</li>
            </ul>
          </div>
        </div>
      </section>
    </aside>
  </main>
</div>
</body>
</html>
```
FILE: styles.css
```css
* { box-sizing: border-box; }
body { margin: 0; font: 12px/16px "Open Sans", "Noto Sans", sans-serif; color: #444; background: #f1f1f1; }
h1, h2, h3, h4, p, ul { margin: 0; padding: 0; font-weight: 400; list-style: none; }
button { font: inherit; color: inherit; background: none; border: 0; padding: 0; white-space: nowrap; }
svg { display: block; flex: none; }
.defs { position: absolute; width: 0; height: 0; }
.app { height: 100vh; display: flex; flex-direction: column; overflow: hidden; }

/* ribbon tabs */
.tabs { display: flex; height: 25px; border-bottom: 1px solid #bdbdbd; color: #666; }
.tab { padding: 3px 15px 0; }
.tab-project { width: 76px; background: #0078d4; color: #fff; }
.tab-layout { width: 75px; }
.tab-active { width: 58px; padding: 3px 0 0; background: #f8f8f8; border: solid #bdbdbd; border-width: 0 1px; margin-bottom: -1px; color: #0078c8; }
.tab:nth-child(n+4) { padding: 3px 16px 0; }
.tab.tab-format { width: 74px; padding: 3px 0 0; background: #d6dbee; }
.account { margin-left: auto; display: flex; align-items: center; padding: 0 2px 2px 0; color: #444; }
.person { width: 10px; height: 16px; margin-right: 6px; }
.bell { width: 16px; height: 16px; margin: 0 10px 0 8px; }
.collapse { width: 10px; height: 7px; }
.caret::after { content: ""; display: inline-block; border: solid transparent; border-width: 3px 3px 0; border-top-color: #58595b; margin-left: 3px; vertical-align: 3px; }
.signin.caret::after { margin-left: 4px; }

/* ribbon */
.ribbon { display: flex; height: 91px; background: #f8f8f8; border-bottom: 1px solid #bdbdbd; }
.group { position: relative; display: flex; flex-direction: column; flex: none; }
.group::after { content: ""; position: absolute; right: 0; top: 4px; bottom: 4px; width: 1px; background: #d2d2d2; }
.tools { display: flex; height: 74px; padding-top: 4px; }
.group h2 { font-size: 11px; line-height: 15px; text-align: center; }
.g-project { width: 437px; }
.g-frames { width: 280px; }
.g-surrounds { width: 295px; }
.g-surrounds .tools { padding-left: 4px; }
.g-graphics { width: 203px; }
.g-graphics .tools { padding-top: 2px; padding-left: 4px; }
.g-graphics .big { margin-top: 2px; }
.g-verti { width: 149px; }
.g-verti .tools { padding-left: 2px; }
.g-styles { width: 72px; }
.g-styles .tools { padding-left: 4px; }
.g-fav { width: 53px; }
.big { display: flex; flex-direction: column; align-items: center; flex: none; padding-top: 1px; line-height: 13px; }
.big svg { width: 32px; height: 32px; margin-bottom: 4px; }
.big span { height: 13px; }
.big .caret::after { margin-left: 1px; }
.big .only { line-height: 10px; }
.w36 { width: 36px; } .w40 { width: 40px; } .w44 { width: 44px; } .w48 { width: 48px; } .w52 { width: 52px; } .w60 { width: 60px; }
.w72 { width: 72px; } .w104 { width: 104px; } .w114 { width: 114px; } .w118 { width: 118px; }
.stack { padding-left: 2px; flex: none; }
.small { display: flex; align-items: center; height: 22px; }
.small svg { width: 16px; height: 16px; margin-right: 4px; }
.small.caret::after { margin-left: 4px; }
.small:disabled { color: #a3a3a3; }
.small:disabled::after { border-top-color: #a3a3a3; }
.logo-text { font: italic bold 12px "Open Sans", sans-serif; fill: #2a9100; }
.gallery { display: flex; width: 137px; height: 68px; border: 1px solid #ababab; background: #fbfbfb; }
.cells { flex: 1; display: grid; grid-template-columns: repeat(4, 30px); grid-template-rows: 20px 26px 20px; place-items: center; }
.cells svg { width: 16px; height: 16px; }
.steps { width: 14px; display: grid; grid-template-rows: repeat(3, 1fr); border-left: 1px solid #ababab; }
.steps button { display: grid; place-items: center; }
.steps button + button { border-top: 1px solid #ababab; }
.steps svg { width: 6px; height: 3px; }
.steps .more { height: 6px; }
.launcher { position: absolute; right: 6px; bottom: 5px; width: 8px; height: 8px; }

/* panels */
main { flex: 1; min-height: 0; display: flex; gap: 6px; padding: 6px 0 0 4px; }
.panel { width: 320px; flex: none; background: #f7f9f9; border: solid #c9c9c9; border-width: 5px 1px 0; }
.panel-head { display: flex; align-items: center; height: 20px; padding: 0 5px; }
.panel-head h1 { flex: 1; font-size: 15px; line-height: 20px; color: #666; }
.tri { border: solid transparent; border-width: 4px 4px 0; border-top-color: #58595b; flex: none; }
.pin { width: 10px; height: 12px; margin: 0 7px 2px 6px; }
.close { width: 10px; height: 10px; }
.panel-head .close { margin-bottom: 2px; }
.search-row { display: flex; align-items: center; padding: 13px 3px 0 4px; }
.funnel { width: 14px; height: 17px; margin-right: 7px; }
.search { flex: 1; display: flex; align-items: center; height: 24px; background: #fff; border: 1px solid #8b8c8f; padding: 0 6px 0 5px; }
.search input { flex: 1; min-width: 0; border: 0; padding: 0; font: italic 12px "Open Sans", sans-serif; outline: 0; }
.search input::placeholder { color: #444; }
.lens { width: 13px; height: 13px; margin-right: 9px; }
.faint { border-width: 3px 3px 0; border-top-color: #bbb; }
.view-icons { display: flex; width: 128px; margin: 8px 0 0 15px; border-bottom: 1px solid #c9c9c9; }
.view-icons button { width: 32px; height: 33px; padding: 0 4px; }
.view-icons .on { border-bottom: 3px solid #0078c8; margin-bottom: -1px; height: 34px; }
.view-icons svg { width: 24px; height: 24px; margin-bottom: 7px; }
.panel h3 { font-size: 13px; line-height: 18px; color: #333; }
.contents h3 { margin: 12px 0 0 15px; }
.root { display: flex; align-items: center; height: 24px; margin-top: 6px; padding-left: 6px; }
.expand { width: 7px; height: 7px; margin-right: 6px; }
.ic { width: 16px; height: 16px; }
.root .ic { margin-right: 5px; }
.tree li { display: flex; height: 24px; margin: 0 1px 0 33px; border: 1px solid transparent; }
.tree label { display: flex; align-items: center; padding-left: 1px; }
.tree .ic { margin-right: 5px; }
.lk { width: 12px; height: 14px; margin: 0 5px 0 3px; }
.ul { width: 15px; height: 14px; margin: 0 2px 0 3px; }
.tree .parent { margin-left: 24px; align-items: center; }
.closed { width: 6px; height: 9px; margin-right: 3px; }
.tree .selected { background: #c5daee; border-color: #0a7cc4; font-weight: 600; }
input[type=checkbox] { appearance: none; width: 14px; height: 14px; margin: 0; flex: none; background: #fff; border: 1px solid #77787b; }
input[type=checkbox]:checked::before { content: ""; display: block; width: 12px; height: 12px; background: #58595b; clip-path: polygon(14% 50%, 28% 46%, 42% 66%, 76% 12%, 90% 16%, 48% 90%, 36% 90%); }

/* layout view */
.view { flex: 1; min-width: 0; display: flex; flex-direction: column; }
.doc-tabs { display: flex; align-items: flex-start; height: 23px; border-bottom: 3px solid #d0d0d0; }
.doc-tab { display: flex; align-items: center; height: 22px; width: 107px; background: #c9c9c9; color: #6a6a6a; padding-left: 6px; }
.doc-tab span { margin: 0 auto 0 5px; }
.doc-tab .close { margin-right: 6px; }
.grey { margin: 11px 4px 0 auto; border-top-color: #8b8c8f; }
.workspace { flex: 1; min-height: 0; display: grid; grid-template: 20px 1fr / 20px 1fr 13px; border: solid #d0d0d0; border-width: 0 1px; background: #f7f9f9; }
.ruler-h, .ruler-v { width: 100%; height: 100%; border: 1px solid #4d4d4f; font: 11px "Open Sans", sans-serif; fill: #6d6e71; overflow: hidden; min-height: 0; shape-rendering: crispEdges; }
.ruler-v { grid-area: 2 / 1; border-bottom: 0; }
.canvas { grid-area: 2 / 2; background: #e0e0de; display: flex; justify-content: center; align-items: flex-start; padding-top: 26px; overflow: hidden; }
.scroll { grid-area: 1 / 3 / 3 / 4; display: flex; flex-direction: column; align-items: center; gap: 3px; padding-top: 22px; }
.scroll svg { width: 8px; height: 6px; }
.track { flex: 1; width: 8px; background: #dedede; display: grid; grid-template-rows: 187fr 401fr 187fr; }
.thumb { grid-row: 2; background: #7abce8; }

/* printed sheet: elements are placed freely on the paper */
.sheet { position: relative; flex: none; width: 527px; height: 745px; background: #fff; border: 1px solid #a8a8a8; box-shadow: 0 0 4px #999; color: #000; }
.map-area { position: absolute; left: 21px; top: 26px; width: 491px; height: 562px; border: 1px solid #222; border-top: 2px solid #888; display: grid; place-items: center; }
.frame-name { border: 1px solid #555; background: #fffff4; line-height: 17px; padding: 0 1px; }
.box { position: absolute; border: 1px solid #222; }
.b-crs { left: 21px; top: 587px; width: 246px; height: 23px; }
.b-title { left: 266px; top: 587px; width: 246px; height: 23px; }
.b-over { left: 21px; top: 609px; width: 246px; height: 110px; }
.b-scale { left: 266px; top: 609px; width: 246px; height: 55px; }
.b-org { left: 266px; top: 663px; width: 246px; height: 56px; }
.t { position: absolute; font: 7px/10px "Liberation Sans", Arial, sans-serif; white-space: nowrap; }
.t u { text-decoration: underline wavy #f22 1px; text-underline-offset: -1px; text-decoration-skip-ink: none; }
.strong { font-weight: 700; }
.larger { font-size: 8px; }
.tiny { font-size: 5px; line-height: 6px; }
.t-crscap { left: 30px; top: 594px; }
.t-crs { right: 266px; top: 594px; }
.t-title { left: 272px; top: 594px; }
.t-index { right: 22px; top: 594px; }
.c1 { left: 272px; } .c2 { left: 356px; }
.r1 { top: 614px; } .r2 { top: 636px; } .r3 { top: 649px; } .r4 { top: 669px; } .r5 { top: 703px; }
.s0 { left: 272px; top: 624px; } .s1 { left: 322px; top: 624px; } .s2 { left: 340px; top: 630px; }
.bar { position: absolute; left: 273px; top: 630px; width: 65px; height: 5px; }
.dash { position: absolute; border: 1px dashed #bbb; }
.d1 { left: 469px; top: 618px; width: 36px; height: 37px; }
.d2 { left: 421px; top: 669px; width: 84px; height: 44px; }
.t-disc { left: 0; right: 0; top: 728px; padding-left: 8px; text-align: center; }

/* format panel */
.format { border-top: 5px solid #0078d4; }
.format h1 { color: #0078c8; }
.target { font-size: 14px; line-height: 20px; padding: 9px 0 0 8px; text-align: center; }
.mode { display: flex; align-items: center; padding: 7px 0 0 7px; gap: 15px; }
.mode button { font-size: 13px; line-height: 19px; border-bottom: 2px solid #0078c8; }
.format .view-icons { margin: 21px 0 0 6px; }
.format h3 { margin: 15px 0 0 6px; }
.props { padding: 0 20px 0 12px; }
.props h4 { display: flex; align-items: center; font-size: 13px; line-height: 18px; margin-top: 2px; }
.props h4 svg { width: 10px; height: 8px; margin-right: 2px; }
.field { display: flex; align-items: center; padding-left: 14px; }
.name-field { margin-top: 2px; }
.field label { width: 38px; }
.field input { flex: 1; min-width: 0; height: 24px; border: 1px solid #8b8c8f; background: #fff; padding: 0 2px; font: inherit; color: inherit; }
.check { display: flex; align-items: center; height: 15px; margin: 6px 0 0 52px; gap: 4px; }
.highlighted { border: 2px solid #f01818; border-radius: 6px; margin: 3px 11px 0 5px; padding: 0 6px 10px 5px; box-shadow: inset 0 0 6px #aaa, 0 0 3px #bbb; }
.highlighted h4 { margin-top: 0; line-height: 17px; padding-bottom: 1px; }
.field.top { align-items: flex-start; }
.top label { padding-top: 4px; }
.combo { flex: 1; }
.combo-box { display: flex; align-items: center; height: 23px; border: 1px solid #a8a8a8; background: #fff; padding-left: 2px; }
.combo-box select { appearance: none; flex: 1; min-width: 0; border: 0; background: none; font: inherit; color: inherit; padding: 0 0 0 6px; }
.drop { width: 15px; height: 22px; display: grid; place-items: center; background: #a5c5e0; border: 1px solid #7fb2dc; }
.drop .tri { border-width: 3px 3px 0; }
.options { border: 1px solid #000; background: #fff; box-shadow: 3px 3px 4px #aaa; }
.options li { display: flex; align-items: center; height: 20px; padding-left: 5px; gap: 6px; }
.options .hover { background: #c5daee; }
.options .hover .ic { width: 14px; height: 14px; margin: 0 1px; }
```
